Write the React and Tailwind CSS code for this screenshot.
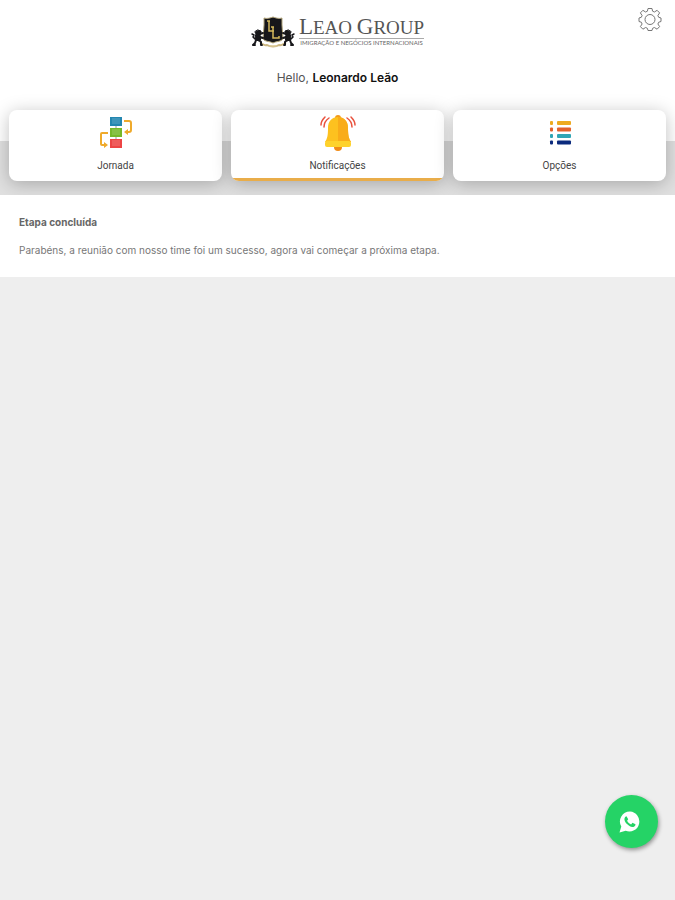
import { useState } from 'react'

const TABS = [
  { id: 'jornada', label: 'Jornada', Icon: JourneyIcon },
  { id: 'notificacoes', label: 'Notificações', Icon: BellIcon },
  { id: 'opcoes', label: 'Opções', Icon: OptionsIcon },
]

const NOTIFICATIONS = [
  {
    title: 'Etapa concluída',
    text: 'Parabéns, a reunião com nosso time foi um sucesso, agora vai começar a próxima etapa.',
  },
]

function Crest() {
  return (
    <svg className="h-8 w-11" viewBox="0 0 44 32" aria-hidden="true">
      <path d="M9 27c3 1 4 3 7 2 3 2 9 2 12 0 3 1 4-1 7-2" fill="none" stroke="#cbb680" strokeWidth="2" />
      <path d="M13 2c3 1 6 0 9-1 3 1 6 2 9 1v7l1 14c-2 3-7 2-10 4-3-2-8-1-10-4l1-14z" fill="#17171a" stroke="#b5a87e" />
      <path d="M18 5v10h5M16 5h3M22 11v11h6v-2M20 11h3" fill="none" stroke="#d5b95c" strokeWidth="1.5" />
      <g fill="#17171a" stroke="#17171a" strokeLinejoin="round" strokeLinecap="round">
        <g id="lion">
          <path d="M7 14l3 1v2l-1 2 1 4-2 2-3-1-1-3 1-3-1-2z" />
          <path d="M9 18l3-1M9 21l3 1M5 24l-1 3-2 2h2M8 24l2 2v3h1" fill="none" strokeWidth="2" />
          <path d="M4 23l-2-2 1-2-2-1" fill="none" strokeWidth="1.5" />
        </g>
        <use href="#lion" transform="matrix(-1 0 0 1 44 0)" />
      </g>
      <path d="M18 30h8" stroke="#e0cf9d" strokeWidth="1" />
    </svg>
  )
}

function Logo() {
  return (
    <div className="flex items-center gap-1">
      <Crest />
      <div className="font-['Liberation_Serif',serif] text-[#555]">
        <div className="border-b border-[#aaa] text-[19px] leading-5 whitespace-nowrap">
          <span className="text-[23px]">L</span>EAO <span className="text-[23px]">G</span>ROUP
        </div>
        <div className="text-center font-['Lato',sans-serif] text-[6px] leading-2 whitespace-nowrap text-[#666]">
          IMIGRAÇÃO E NEGÓCIOS INTERNACIONAIS
        </div>
      </div>
    </div>
  )
}

function GearIcon() {
  return (
    <svg className="size-6" viewBox="0 0 24 24" fill="none" stroke="#777" strokeLinejoin="round" aria-hidden="true">
      <path d="M10 1.500h4l.6 2.700 1.800.8 2.700-1.700 2.500 2.600-1.700 2.600.8 1.800 2.300.7v3.500l-2.300.7-.8 1.800 1.700 2.600-2.500 2.600-2.700-1.700-1.800.8-.6 2.200h-4l-.6-2.200-1.800-.8-2.700 1.700-2.500-2.600 1.700-2.600-.8-1.800-2.300-.7v-3.500l2.300-.7.8-1.800-1.700-2.600 2.500-2.600 2.700 1.700 1.800-.8z" />
      <circle cx="12" cy="12.500" r="5" />
    </svg>
  )
}

function JourneyIcon() {
  return (
    <svg className="size-9" viewBox="0 0 36 36" aria-hidden="true">
      <path d="M18 10v15" stroke="#999" />
      <path d="M12 2h12v9H12z" fill="#2386b0" />
      <path d="M12 13h12v9H12z" fill="#76b82a" />
      <path d="M12 24h12v9H12z" fill="#ed4545" />
      <path d="M14 4h8M14 6h8M14 8h8M14 15h8M14 17h8M14 19h8M14 26h8M14 28h8M14 30h8" stroke="#fff" strokeOpacity=".25" />
      <g fill="none" stroke="#efaa2b" strokeWidth="2">
        <path d="M26 6h5q2 0 2 2v7q0 2-2 2h-3" />
        <path d="M10 18H4q-1 0-1 1v10q0 1 1 1h3" />
      </g>
      <path d="M30 14v6l-4-3zM6 27v6l4-3z" fill="#efaa2b" />
    </svg>
  )
}

function BellIcon() {
  return (
    <svg className="size-9" viewBox="0 0 36 36" aria-hidden="true">
      <circle cx="18" cy="32" r="4" fill="#f28b16" />
      <circle cx="18" cy="3" r="3" fill="#f29a1c" />
      <path d="M18 2C12 2 8 6 8 13c0 8-1 11-3 14h26c-2-3-3-6-3-14 0-7-4-11-10-11z" fill="#fdc11f" />
      <path d="M18 2c6 0 10 4 10 11 0 8 1 11 3 14H18z" fill="#f9ac19" />
      <rect x="5" y="26" width="26" height="6" rx="2" fill="#fed22c" />
      <path d="M4 12c0-4 2-7 5-9M1 10c0-3 2-6 4-8M32 12c0-4-2-7-5-9M35 10c0-3-2-6-4-8" fill="none" stroke="#e9533f" strokeWidth="1.500" strokeLinecap="round" />
    </svg>
  )
}

function OptionsIcon() {
  return (
    <svg className="size-9" viewBox="0 0 36 36" aria-hidden="true">
      {['#eeaa20', '#e2602c', '#30a5b5', '#0b2a7d'].map((color, i) => (
        <g key={color} fill={color}>
          <rect x="8" y={6 + i * 6.5} width="3" height="4" rx="1" />
          <rect x="15" y={6 + i * 6.5} width="14" height="4" rx="1" />
        </g>
      ))}
    </svg>
  )
}

function TabCard({ label, Icon, active, onClick }) {
  return (
    <button
      type="button"
      aria-pressed={active}
      className="flex h-[71px] flex-col items-center overflow-hidden rounded-lg bg-white pt-[5px] shadow-[0_3px_18px_rgba(0,0,0,0.25)]"
      onClick={onClick}
    >
      <Icon />
      <span className="mt-[7px] font-['Roboto',sans-serif] text-[10px] leading-4 text-[#444]">{label}</span>
      {active && <span className="mt-auto h-[3px] w-full bg-[#e9ad4a]" />}
    </button>
  )
}

export default function App() {
  const [tab, setTab] = useState('notificacoes')

  return (
    <div className="min-h-screen bg-[#eee] font-['Inter',sans-serif]">
      <header className="relative flex flex-col items-center bg-white pt-4 pb-[23px]">
        <Logo />
        <p className="mt-[21px] text-xs leading-[18px] text-[#555]">
          Hello, <strong className="font-semibold text-[#111]">Leonardo Leão</strong>
        </p>
        <button type="button" aria-label="Configurações" className="absolute top-[7px] right-[13px]">
          <GearIcon />
        </button>
      </header>

      <nav className="relative grid grid-cols-3 gap-[9px] bg-[linear-gradient(#fff_31px,#e0e0e0_31px)] px-[9px] pb-[14px]">
        {TABS.map(t => (
          <TabCard key={t.id} label={t.label} Icon={t.Icon} active={tab === t.id} onClick={() => setTab(t.id)} />
        ))}
      </nav>

      <main className="relative bg-white">
        {NOTIFICATIONS.map(n => (
          <article key={n.title} className="px-[19px] pt-[19px] pb-[19px] text-[10px] leading-4">
            <h2 className="font-bold text-[#666]">{n.title}</h2>
            <p className="mt-3 text-[#777]">{n.text}</p>
          </article>
        ))}
      </main>

      <a
        href="#whatsapp"
        aria-label="WhatsApp"
        className="fixed right-[17px] bottom-[52px] flex size-[53px] items-center justify-center rounded-full bg-[#25d366] pr-1 shadow-[1px_2px_4px_rgba(0,0,0,0.4)]"
      >
        <svg className="size-6" viewBox="0 0 24 24" aria-hidden="true">
          <path d="M12 1.500a10 10 0 0 0-8.700 15L1.500 22.500l6.200-1.700A10 10 0 1 0 12 1.500z" fill="#fff" />
          <path d="M8.500 6.300c-.4 0-1 .2-1.500.9-1.600 2.500.5 5.300 2 6.900 1.700 1.800 4.600 3.700 7 2.600.9-.4 1.500-1.100 1.500-2.400l-3-1.500-1.400 1.600c-1.800-.7-3.100-2-4-3.700l1.100-1.400z" fill="#25d366" />
        </svg>
      </a>
    </div>
  )
}
